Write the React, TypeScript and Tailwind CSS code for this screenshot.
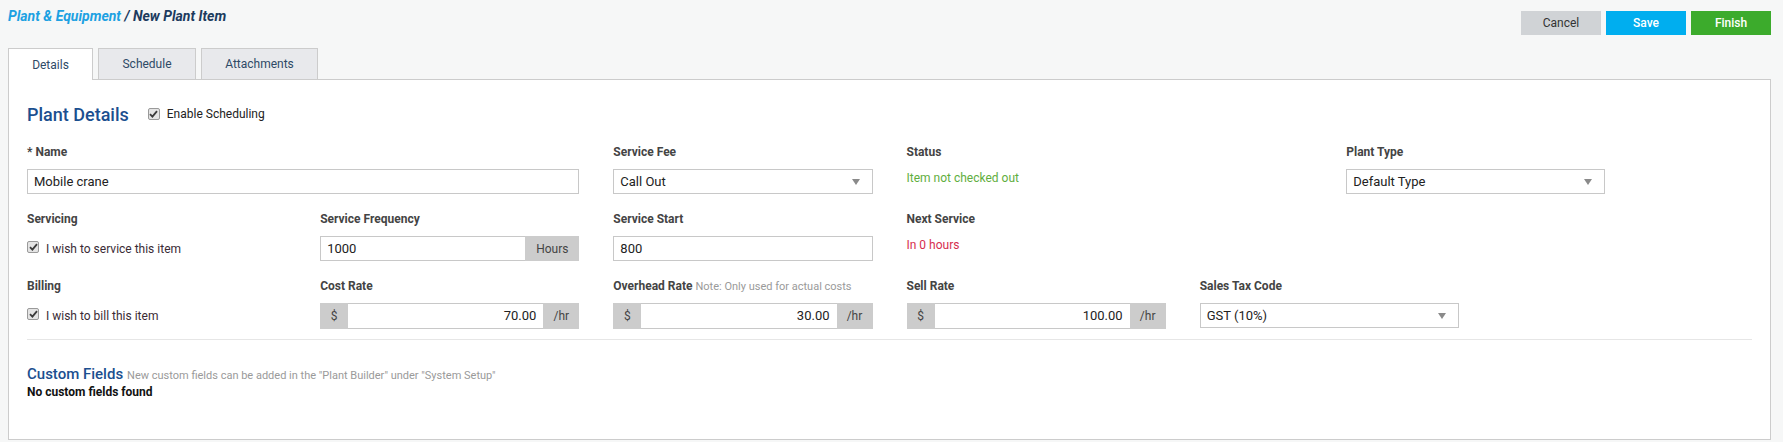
import React from "react";

function Check() {
  return (
    <span className="inline-flex w-[12px] h-[12px] shrink-0 items-center justify-center rounded-[2px] border border-[#9a9a9a] bg-[#e4e4e4]">
      <svg width="9" height="8" viewBox="0 0 9 8">
        <path d="M1 4.2 L3.4 6.6 L8 1.2" fill="none" stroke="#3a3a3a" strokeWidth="1.8" />
      </svg>
    </span>
  );
}

function Label({ children }: { children: React.ReactNode }) {
  return <div className="h-[16px] leading-[16px] text-[12px] font-bold text-[#444]">{children}</div>;
}

function TextBox({ value }: { value: string }) {
  return (
    <div className="mt-[9px] h-[25px] border border-[#c8c8c8] bg-white px-[6px] flex items-center text-[13px] text-[#222]">
      {value}
    </div>
  );
}

function SelectBox({ value }: { value: string }) {
  return (
    <div className="mt-[9px] h-[25px] border border-[#c8c8c8] bg-white pl-[6px] pr-[12px] flex items-center justify-between text-[13px] text-[#222]">
      <span>{value}</span>
      <svg width="8" height="6" viewBox="0 0 8 6">
        <path d="M0 0 H8 L4 6 Z" fill="#8a8a8a" />
      </svg>
    </div>
  );
}

function RateBox({ value }: { value: string }) {
  return (
    <div className="mt-[9px] h-[26px] flex text-[13px]">
      <div className="w-[28px] bg-[#cccccc] flex items-center justify-center text-[12px] text-[#444]">$</div>
      <div className="flex-1 border-y border-[#c8c8c8] bg-white px-[7px] flex items-center justify-end text-[#222]">{value}</div>
      <div className="w-[36px] bg-[#cccccc] flex items-center justify-center text-[12px] text-[#444]">/hr</div>
    </div>
  );
}

function CheckLine({ text }: { text: string }) {
  return (
    <div className="mt-[9px] h-[25px] flex items-center gap-[7px] text-[12px] text-[#3a2b35]">
      <span className="-mt-[3px] flex"><Check /></span>
      <span>{text}</span>
    </div>
  );
}

export default function App() {
  return (
    <div className="w-[1783px] h-[442px] bg-[#f6f7f7] pl-[8px] pr-[12px] [font-family:Roboto,'Liberation_Sans',sans-serif] overflow-hidden">
      {/* header */}
      <div className="h-[48px] flex justify-between items-start">
        <div className="pt-[6px] leading-[20px] text-[14px] font-bold italic">
          <span className="text-[#1da1e2]">Plant &amp; Equipment</span>
          <span className="text-[#1c3b5e]"> / New Plant Item</span>
        </div>
        <div className="mt-[11px] flex gap-[5px] text-[12px]">
          <button className="w-[80px] h-[24px] bg-[#d0d3d6] text-[#333]">Cancel</button>
          <button className="w-[80px] h-[24px] bg-[#00aeef] text-white font-medium">Save</button>
          <button className="w-[80px] h-[24px] bg-[#3cab2c] text-white font-medium">Finish</button>
        </div>
      </div>

      {/* tabs */}
      <div className="relative z-10 -mb-px flex items-end gap-[5px] text-[12px] text-[#2e4a66]">
        <div className="w-[85px] h-[32px] border border-b-0 border-[#cccccc] bg-white flex items-center justify-center">Details</div>
        <div className="w-[98px] h-[31px] mb-px border border-b-0 border-[#cccccc] bg-[#e8e9ec] flex items-center justify-center">Schedule</div>
        <div className="w-[117px] h-[31px] mb-px border border-b-0 border-[#cccccc] bg-[#e8e9ec] flex items-center justify-center">Attachments</div>
      </div>

      {/* panel */}
      <div className="h-[361px] border border-[#cccccc] bg-white px-[18px] pt-[22px]">
        <div className="h-[24px] flex items-center">
          <h2 className="text-[18px] font-medium text-[#1b4f8f]">Plant Details</h2>
          <label className="ml-[19px] flex items-center gap-[7px] text-[12px] text-[#222]">
            <Check />
            Enable Scheduling
          </label>
        </div>

        <div className="mt-[18px] grid grid-cols-12 gap-x-[34px] gap-y-[17px]">
          {/* row 1 */}
          <div className="col-span-4">
            <Label>* Name</Label>
            <TextBox value="Mobile crane" />
          </div>
          <div className="col-span-2">
            <Label>Service Fee</Label>
            <SelectBox value="Call Out" />
          </div>
          <div className="col-span-3">
            <Label>Status</Label>
            <div className="mt-[10px] leading-[16px] text-[12px] text-[#5fae3e]">Item not checked out</div>
          </div>
          <div className="col-span-2">
            <Label>Plant Type</Label>
            <SelectBox value="Default Type" />
          </div>
          <div />

          {/* row 2 */}
          <div className="col-span-2">
            <Label>Servicing</Label>
            <CheckLine text="I wish to service this item" />
          </div>
          <div className="col-span-2">
            <Label>Service Frequency</Label>
            <div className="mt-[9px] h-[25px] flex text-[13px]">
              <div className="flex-1 border border-r-0 border-[#c8c8c8] bg-white px-[6px] flex items-center text-[#222]">1000</div>
              <div className="w-[54px] bg-[#cccccc] flex items-center justify-center text-[12px] text-[#444]">Hours</div>
            </div>
          </div>
          <div className="col-span-2">
            <Label>Service Start</Label>
            <TextBox value="800" />
          </div>
          <div className="col-span-2">
            <Label>Next Service</Label>
            <div className="mt-[10px] leading-[16px] text-[12px] text-[#d62d4f]">In 0 hours</div>
          </div>
          <div className="col-span-4" />

          {/* row 3 */}
          <div className="col-span-2">
            <Label>Billing</Label>
            <CheckLine text="I wish to bill this item" />
          </div>
          <div className="col-span-2">
            <Label>Cost Rate</Label>
            <RateBox value="70.00" />
          </div>
          <div className="col-span-2">
            <Label>
              Overhead Rate <span className="text-[11px] font-normal text-[#9a9a9a]">Note: Only used for actual costs</span>
            </Label>
            <RateBox value="30.00" />
          </div>
          <div className="col-span-2">
            <Label>Sell Rate</Label>
            <RateBox value="100.00" />
          </div>
          <div className="col-span-2">
            <Label>Sales Tax Code</Label>
            <SelectBox value="GST (10%)" />
          </div>
        </div>

        <div className="mt-[10px] border-t border-[#e6e6e6]" />

        <div className="mt-[23px] h-[20px] flex items-baseline gap-[4px]">
          <span className="text-[15px] font-medium text-[#1b4f8f]">Custom Fields</span>
          <span className="text-[11px] text-[#9a9a9a]">New custom fields can be added in the "Plant Builder" under "System Setup"</span>
        </div>
        <div className="mt-[1px] leading-[16px] text-[12px] font-bold text-[#111]">No custom fields found</div>
      </div>
    </div>
  );
}
